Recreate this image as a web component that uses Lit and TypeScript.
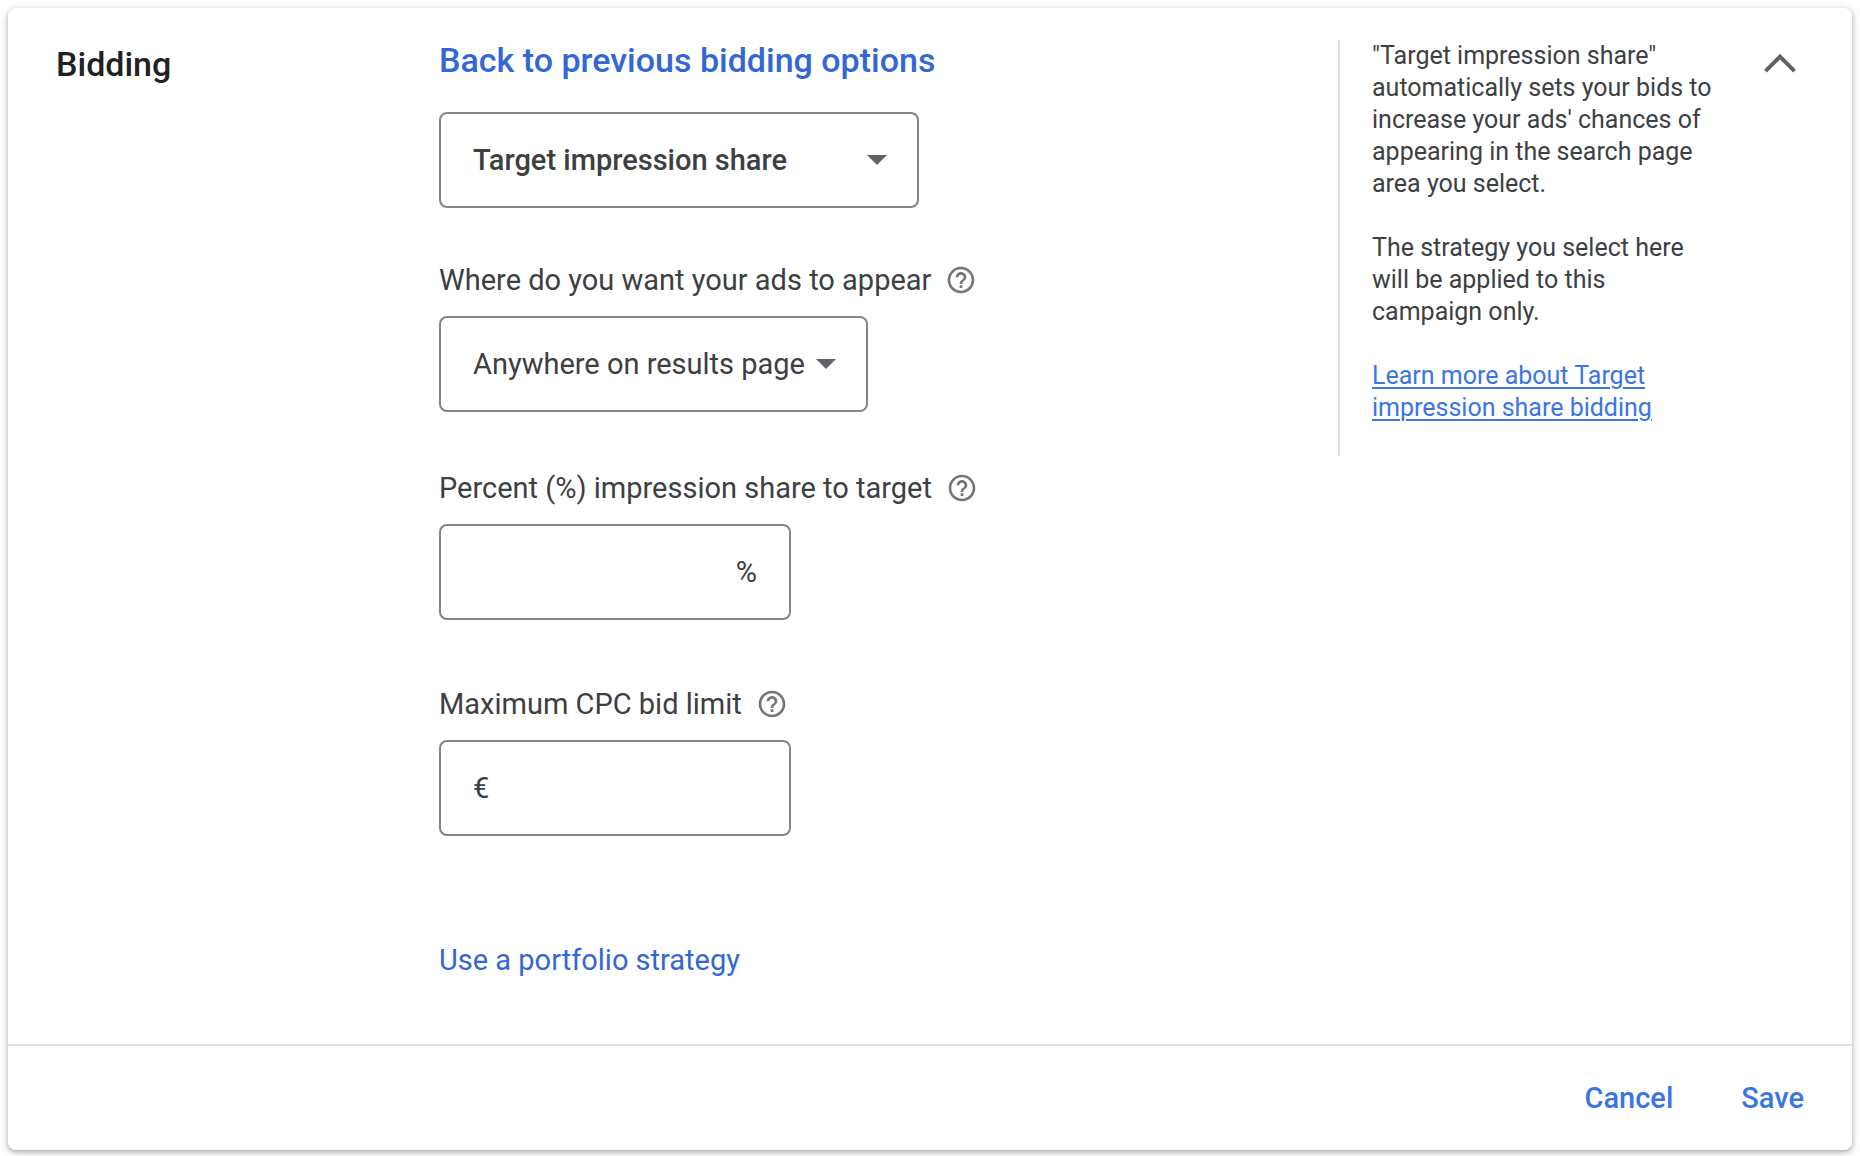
import { LitElement, html, css } from "lit";
import { customElement } from "lit/decorators.js";

@customElement("help-icon")
class HelpIcon extends LitElement {
  static styles = css`
    :host {
      display: inline-flex;
    }
    .help {
      display: flex;
      padding: 0;
      border: 0;
      background: none;
      color: #757575;
      cursor: pointer;
    }
    .glyph {
      display: block;
      width: 32px;
      height: 32px;
      fill: currentColor;
    }
  `;

  render() {
    return html`<button class="help" type="button" aria-label="Help">
      <svg class="glyph" viewBox="0 0 24 24" aria-hidden="true">
        <path
          d="M11 18h2v-2h-2v2zm1-16C6.48 2 2 6.48 2 12s4.48 10 10 10 10-4.48 10-10S17.52 2 12 2zm0 18c-4.41 0-8-3.59-8-8s3.59-8 8-8 8 3.59 8 8-3.59 8-8 8zm0-14c-2.21 0-4 1.79-4 4h2c0-1.1.9-2 2-2s2 .9 2 2c0 2-3 1.75-3 5h2c0-2.25 3-2.5 3-5 0-2.21-1.79-4-4-4z"
        />
      </svg>
    </button>`;
  }
}

@customElement("app-root")
class AppRoot extends LitElement {
  static styles = css`
    :host {
      display: block;
      background: #fff;
      color: #3c4043;
      font-family: Roboto, "Liberation Sans", sans-serif;
      font-size: 29px;
      line-height: 32px;
    }
    * {
      box-sizing: border-box;
    }
    .page {
      display: flex;
      min-height: 100vh;
      padding: 8px 8px 6px;
    }
    .card {
      display: flex;
      flex: 1;
      flex-direction: column;
      min-width: 0;
      border-radius: 8px;
      background: #fff;
      box-shadow:
        0 2px 4px rgba(60, 64, 67, 0.3),
        0 2px 6px 2px rgba(60, 64, 67, 0.15);
    }
    .body {
      display: grid;
      flex: 1;
      grid-template-columns: 383px minmax(0, 1fr) 386px 80px;
      align-items: start;
      padding: 32px 48px 68px;
    }
    .title {
      margin: 0;
      padding-top: 4px;
      color: #202124;
      font-size: 34px;
      font-weight: 500;
      line-height: 40px;
    }
    .form {
      display: flex;
      flex-direction: column;
      align-items: flex-start;
    }
    .link {
      color: #3367d6;
      text-decoration: none;
    }
    .back {
      margin-bottom: 32px;
      font-size: 34px;
      font-weight: 500;
      line-height: 40px;
    }
    .picker {
      display: grid;
      align-items: center;
      max-width: 100%;
    }
    .strategy {
      width: 480px;
      margin-bottom: 56px;
      font-weight: 500;
    }
    .placement {
      width: 429px;
    }
    .select,
    .arrow {
      grid-area: 1 / 1;
    }
    .arrow {
      justify-self: end;
      width: 20px;
      height: 10px;
      margin-right: 32px;
      fill: #5f6368;
      pointer-events: none;
    }
    .select {
      width: 100%;
      height: 96px;
      margin: 0;
      padding: 0 56px 0 32px;
      border: 2px solid #80868b;
      border-radius: 8px;
      appearance: none;
      background: #fff;
      color: inherit;
      font: inherit;
    }
    .field {
      display: flex;
      flex-direction: column;
      gap: 20px;
      max-width: 100%;
      margin-bottom: 60px;
    }
    .percent {
      margin-bottom: 68px;
    }
    .limit {
      margin-bottom: 108px;
    }
    .caption {
      display: flex;
      align-items: center;
      gap: 14px;
    }
    .box {
      display: flex;
      align-items: center;
      width: 352px;
      max-width: 100%;
      height: 96px;
      padding: 0 32px;
      border: 2px solid #80868b;
      border-radius: 8px;
    }
    .input {
      flex: 1;
      min-width: 0;
      padding: 0;
      border: 0;
      outline: 0;
      background: none;
      color: inherit;
      font: inherit;
    }
    .aside {
      padding: 0 0 32px 32px;
      border-left: 2px solid #dadce0;
      font-size: 25px;
    }
    .note {
      margin: 0 0 32px;
    }
    .note:last-child {
      margin: 0;
    }
    .more {
      color: #3b74e7;
      text-decoration-thickness: 2px;
      text-underline-offset: 3px;
    }
    .collapse {
      display: flex;
      justify-self: end;
      padding: 8px;
      border: 0;
      background: none;
      cursor: pointer;
    }
    .chevron {
      width: 32px;
      height: 32px;
      fill: none;
      stroke: #5f6368;
      stroke-width: 4;
    }
    .footer {
      display: flex;
      justify-content: flex-end;
      gap: 68px;
      padding: 32px 48px;
      border-top: 2px solid #e0e0e0;
    }
    .action {
      padding: 0;
      border: 0;
      background: none;
      color: #3b74e7;
      font: inherit;
      font-weight: 500;
      line-height: 40px;
      cursor: pointer;
    }
  `;

  private arrow() {
    return html`<svg class="arrow" viewBox="0 0 20 10" aria-hidden="true">
      <path d="M0 0h20L10 10z" />
    </svg>`;
  }

  render() {
    return html`
      <main class="page">
        <section class="card" aria-labelledby="title">
          <div class="body">
            <h2 class="title" id="title">Bidding</h2>
            <div class="form">
              <a class="link back" href="#options">Back to previous bidding options</a>
              <div class="picker strategy">
                <select class="select" aria-label="Bid strategy">
                  <option>Target impression share</option>
                </select>
                ${this.arrow()}
              </div>
              <div class="field">
                <div class="caption">
                  <label for="placement">Where do you want your ads to appear</label>
                  <help-icon></help-icon>
                </div>
                <div class="picker placement">
                  <select class="select" id="placement">
                    <option>Anywhere on results page</option>
                  </select>
                  ${this.arrow()}
                </div>
              </div>
              <div class="field percent">
                <div class="caption">
                  <label for="percent">Percent (%) impression share to target</label>
                  <help-icon></help-icon>
                </div>
                <div class="box">
                  <input class="input" id="percent" type="text" inputmode="decimal" />
                  <span>%</span>
                </div>
              </div>
              <div class="field limit">
                <div class="caption">
                  <label for="limit">Maximum CPC bid limit</label>
                  <help-icon></help-icon>
                </div>
                <div class="box">
                  <span>€</span>
                  <input class="input" id="limit" type="text" inputmode="decimal" />
                </div>
              </div>
              <a class="link" href="#portfolio">Use a portfolio strategy</a>
            </div>
            <aside class="aside">
              <p class="note">
                "Target impression share" automatically sets your bids to increase your ads' chances
                of appearing in the search page area you select.
              </p>
              <p class="note">
                The strategy you select here<br />will be applied to this<br />campaign only.
              </p>
              <p class="note">
                <a class="more" href="#learn">Learn more about Target impression share bidding</a>
              </p>
            </aside>
            <button class="collapse" type="button" aria-label="Collapse" aria-expanded="true">
              <svg class="chevron" viewBox="0 0 32 32" aria-hidden="true">
                <path d="M1.5 23.2 16 8.7 30.5 23.2" />
              </svg>
            </button>
          </div>
          <footer class="footer">
            <button class="action" type="button">Cancel</button>
            <button class="action" type="button">Save</button>
          </footer>
        </section>
      </main>
    `;
  }
}
